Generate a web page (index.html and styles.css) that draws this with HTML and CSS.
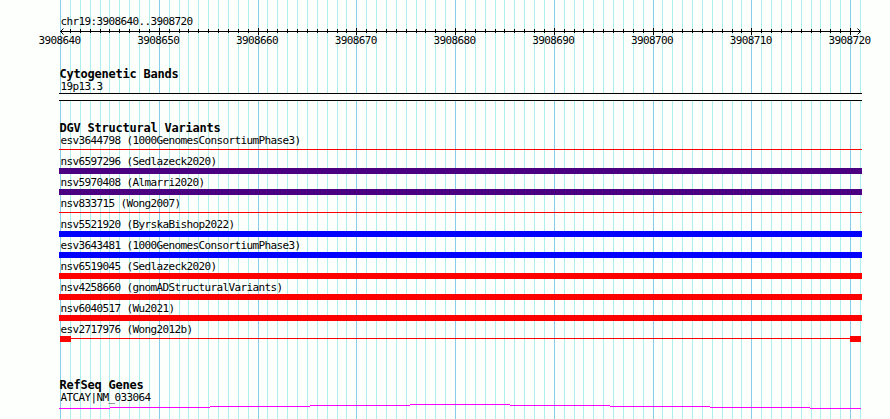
FILE: index.html
```html
<!DOCTYPE html>
<html lang="en">
<head>
<meta charset="utf-8">
<title>chr19:3908640..3908720</title>
<link rel="stylesheet" href="styles.css">
</head>
<body>
<main class="browser">
  <svg class="grid" width="890" height="419" aria-hidden="true">
    <path class="grid-minor" id="minor"/>
    <path class="grid-major" id="major"/>
  </svg>
  <section class="scale">
    <div class="label">chr19:3908640..3908720</div>
    <svg class="ruler" width="803" height="6" aria-hidden="true">
      <path class="ink" id="ticks"/>
      <path class="arrow" d="M4.5 .5L1.5 3.5L4.5 6.5M798.5 .5L801.5 3.5L798.5 6.5"/>
    </svg>
    <div class="numbers"><span>3908640</span><span>3908650</span><span>3908660</span><span>3908670</span><span>3908680</span><span>3908690</span><span>3908700</span><span>3908710</span><span>3908720</span></div>
  </section>
  <section class="track bands">
    <h2>Cytogenetic Bands</h2>
    <div class="label">19p13.3</div>
    <div class="band"></div>
  </section>
  <section class="track variants">
    <h2>DGV Structural Variants</h2>
    <div class="row"><div class="label">esv3644798 (1000GenomesConsortiumPhase3)</div><div class="bar thin"></div></div>
    <div class="row"><div class="label">nsv6597296 (Sedlazeck2020)</div><div class="bar indigo"></div></div>
    <div class="row"><div class="label">nsv5970408 (Almarri2020)</div><div class="bar indigo"></div></div>
    <div class="row"><div class="label">nsv833715 (Wong2007)</div><div class="bar thin"></div></div>
    <div class="row"><div class="label">nsv5521920 (ByrskaBishop2022)</div><div class="bar blue"></div></div>
    <div class="row"><div class="label">esv3643481 (1000GenomesConsortiumPhase3)</div><div class="bar blue"></div></div>
    <div class="row"><div class="label">nsv6519045 (Sedlazeck2020)</div><div class="bar red"></div></div>
    <div class="row"><div class="label">nsv4258660 (gnomADStructuralVariants)</div><div class="bar red"></div></div>
    <div class="row"><div class="label">nsv6040517 (Wu2021)</div><div class="bar red"></div></div>
    <div class="row"><div class="label">esv2717976 (Wong2012b)</div><div class="ends"><i class="block"></i><i class="link"></i><i class="block"></i></div></div>
  </section>
  <section class="track genes">
    <h2>RefSeq Genes</h2>
    <div class="label">ATCAY|NM_033064</div>
    <svg class="gene" width="803" height="6" aria-hidden="true">
      <path d="M0 4.5H51M51 3.5H151M151 2.5H251M251 1.5H351M351 .5H451M451 1.5H551M551 2.5H651M651 3.5H751M751 4.5H802"/>
    </svg>
  </section>
</main>
<script src="grid.js"></script>
</body>
</html>
```
FILE: styles.css
```css
body {
  margin: 0;
  background: #fdfffc;
  color: #000;
}
.browser {
  position: relative;
  box-sizing: border-box;
  width: 890px;
  height: 419px;
  padding: 15px 28px 0 59px;
  overflow: hidden;
  font: 11px/13px "DejaVu Sans Mono", monospace;
  letter-spacing: -0.622px;
}
.grid {
  position: absolute;
  left: 0;
  top: 0;
  z-index: -1;
}
.grid path { fill: none; stroke-width: 1; shape-rendering: crispEdges; }
.grid .grid-minor { stroke: #afeeee; }
.grid .grid-major { stroke: #87ceeb; }
.label {
  height: 13px;
  padding-left: 1.4px;
  white-space: pre;
}
.ruler, .gene { display: block; overflow: visible; }
.ink { fill: none; stroke: #000; shape-rendering: crispEdges; }
.arrow { fill: none; stroke: #000; stroke-width: 1; }
.numbers {
  display: flex;
  justify-content: space-between;
  width: 832px;
  height: 13px;
  margin-left: -20.4px;
}
.numbers span { width: 42px; }
h2 {
  height: 12px;
  margin: 0;
  padding-left: 0.5px;
  font-size: 12px;
  line-height: 12px;
  font-weight: bold;
  letter-spacing: -0.224px;
  white-space: pre;
}
.bands { margin-top: 21px; }
.band {
  box-sizing: border-box;
  height: 8px;
  border: solid #000;
  border-width: 1px 0;
  background: #fdfffc;
}
.variants { margin-top: 21px; }
.row { height: 21px; }
.bar { height: 6px; }
.bar.thin {
  height: 1px;
  margin-top: 2px;
  background: #f00;
}
.indigo { background: #4b0082; }
.blue { background: #00f; }
.red { background: #f00; }
.ends {
  display: flex;
  height: 6px;
  margin: 0 1px;
}
.block { width: 11px; background: #f00; }
.link {
  flex: 1;
  height: 1px;
  margin-top: 2px;
  background: #f00;
}
.genes { margin-top: 35px; }
.gene path { fill: none; stroke: #f0f; shape-rendering: crispEdges; }
```
FILE: grid.js
```js
// One line per base pair; every tenth is a major line.
const BASES = 81;
const LEFT = 60;
let minor = "", major = "", ticks = "M1 3.5H802";
for (let i = 0; i <= BASES; i++) {
  const x = Math.round(LEFT + i * 800 / BASES) + 0.5;
  const isMajor = i % 10 === 0;
  if (isMajor) major += `M${x} 0V419`;
  else minor += `M${x} 0V419`;
  if (i > 0 && i < BASES) ticks += `M${x - 59} ${isMajor ? "0V7" : "1V5"}`;
}
document.getElementById("minor").setAttribute("d", minor);
document.getElementById("major").setAttribute("d", major);
document.getElementById("ticks").setAttribute("d", ticks);
```
